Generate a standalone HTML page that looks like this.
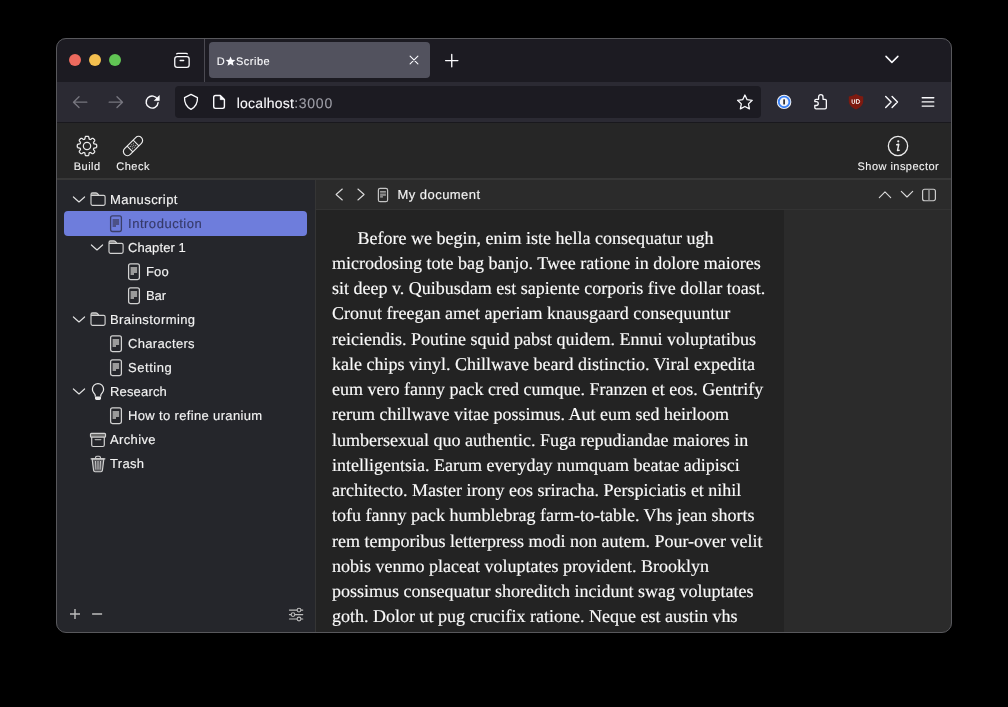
<!DOCTYPE html>
<html>
<head>
<meta charset="utf-8">
<title>D*Scribe</title>
<style>
html,body{margin:0;padding:0;background:#000;}
body{text-rendering:geometricPrecision;width:1008px;height:707px;position:relative;overflow:hidden;font-family:"Liberation Sans",sans-serif;color:#fff;}
.abs,#win *{position:absolute;box-sizing:border-box;}
#win{will-change:transform;position:absolute;left:0;top:0;width:1008px;height:707px;clip-path:inset(38px 56px 74.5px 56px round 10px);}
#edge{position:absolute;left:56px;top:38px;width:896px;height:594.5px;border-radius:10px;border:1px solid #58585c;box-sizing:border-box;pointer-events:none;}
svg{overflow:visible;}
.t{white-space:nowrap;line-height:1;}
/* chrome */
#titlebar{left:56px;top:38px;width:896px;height:44px;background:#1c1b22;}
#navbar{left:56px;top:82px;width:896px;height:40px;background:#2b2a33;}
#navsep{left:56px;top:122px;width:896px;height:1px;background:#19181d;}
#tab{left:209px;top:42px;width:221px;height:36px;background:#52525e;border-radius:4px;}
#tabsep{left:204px;top:38px;width:1px;height:44px;background:#4b4a52;}
#urlbar{left:175px;top:86px;width:586px;height:32px;background:#1c1b22;border-radius:4px;}
/* app */
#apptb{left:56px;top:123px;width:896px;height:55px;background:#262626;}
#apptbline{left:56px;top:178px;width:896px;height:2px;background:#373737;}
#sidebar{left:56px;top:180px;width:259px;height:453px;background:#25262b;}
#sbline{left:315px;top:180px;width:1px;height:453px;background:#353535;}
#edhead{left:316px;top:180px;width:636px;height:29px;background:#2b2b2b;}
#edheadline{left:316px;top:209px;width:636px;height:1px;background:#333333;}
#edtext{left:316px;top:210px;width:468px;height:423px;background:#232323;}
#edright{left:784px;top:210px;width:168px;height:423px;background:#2b2b2b;}
#sel{left:64px;top:211.35px;width:243px;height:24.3px;background:#6e7ddc;border-radius:4px;}
.tabt{font-size:11px;color:#fbfbfe;-webkit-text-stroke:0.1px currentColor;}
.urlt{font-size:14px;color:#fbfbfe;-webkit-text-stroke:0.1px currentColor;}
.lbl{font-size:11px;color:#f3f3f3;-webkit-text-stroke:0.1px currentColor;}
.tree{font-size:13px;color:#f3f3f3;-webkit-text-stroke:0.14px currentColor;}
.para{-webkit-text-stroke:0.15px currentColor;font-family:"Liberation Serif",serif;font-size:18px;line-height:25.25px;color:#fbfbfb;}
</style>
</head>
<body>
<div id="win">
  <div id="titlebar"></div>
  <div id="navbar"></div>
  <div id="navsep"></div>
  <div id="tabsep"></div>
  <div id="tab"></div>
  <div id="urlbar"></div>
  <div id="apptb"></div>
  <div id="apptbline"></div>
  <div id="sidebar"></div>
  <div id="sbline"></div>
  <div id="edhead"></div>
  <div id="edheadline"></div>
  <div id="edtext"></div>
  <div id="edright"></div>
  <div id="sel"></div>
<svg style="left:0;top:0" width="1" height="1"><circle cx="75" cy="60" r="6" fill="#ec6a5e"/><circle cx="95" cy="60" r="6" fill="#f4bf4f"/><circle cx="115" cy="60" r="6" fill="#61c554"/></svg>
<svg style="left:0;top:0" width="1" height="1"><g fill="none" stroke="#fbfbfe" stroke-width="1.3" stroke-linecap="round"><path d="M176.7,53.9 Q177,53.3 178,53.3 H186 Q187,53.3 187.3,53.9"/><rect x="174.75" y="56.65" width="14.4" height="10.7" rx="2.4"/><path d="M180.1,60.5 H183.7"/></g></svg>
<div class="tabt t lb" style="left:216.85px;top:57.19px;letter-spacing:0.000px;">D</div>
<svg style="left:0;top:0" width="1" height="1"><polygon points="230.55,56.45 231.93,59.65 235.40,59.97 232.78,62.28 233.55,65.68 230.55,63.90 227.55,65.68 228.32,62.28 225.70,59.97 229.17,59.65" fill="#fbfbfe"/></svg>
<div class="tabt t lb" style="left:235.94px;top:57.19px;letter-spacing:0.513px;">Scribe</div>
<svg style="left:0;top:0" width="1" height="1"><path d="M410.1,56.1 L417.9,63.9 M417.9,56.1 L410.1,63.9" stroke="#fbfbfe" stroke-width="1.1" stroke-linecap="round"/></svg>
<svg style="left:0;top:0" width="1" height="1"><path d="M445.6,60.6 H457.9 M451.75,54.5 V66.8" stroke="#fbfbfe" stroke-width="1.35" stroke-linecap="round"/></svg>
<svg style="left:0;top:0" width="1" height="1"><path d="M886,56.4 L891.9,62.4 L897.9,56.4" fill="none" stroke="#fbfbfe" stroke-width="1.5" stroke-linecap="round" stroke-linejoin="round"/></svg>
<svg style="left:0;top:0" width="1" height="1"><g fill="none" stroke="#77767f" stroke-width="1.35" stroke-linecap="round" stroke-linejoin="round"><path d="M86.8,102.15 H73.6 M79,96.7 L73.5,102.15 L79,107.6"/><path d="M109.2,102.15 H122.4 M117,96.7 L122.5,102.15 L117,107.6"/></g></svg>
<svg style="left:0;top:0" width="1" height="1"><path d="M157.6,99.6 A6,6 0 1 0 158.1,102.6" fill="none" stroke="#fbfbfe" stroke-width="1.4" stroke-linecap="round"/><path d="M159.3,95.6 V100.6 H154.3 Z" fill="#fbfbfe" stroke="#fbfbfe" stroke-width="0.6" stroke-linejoin="round"/></svg>
<svg style="left:0;top:0" width="1" height="1"><path d="M191,94.45 L197.45,97.55 C197.75,102.6 196.2,106.6 191,109.35 C185.8,106.6 184.25,102.6 184.55,97.55 Z" fill="none" stroke="#fbfbfe" stroke-width="1.3" stroke-linejoin="round"/></svg>
<svg style="left:0;top:0" width="1" height="1"><path d="M215.5,95.5 H220.3 L224.4,99.6 V106.6 Q224.4,108.4 222.6,108.4 H215.5 Q213.7,108.4 213.7,106.6 V97.3 Q213.7,95.5 215.5,95.5 Z" fill="none" stroke="#fbfbfe" stroke-width="1.4" stroke-linejoin="round"/><path d="M220.3,95.5 L224.4,99.6 H220.3 Z" fill="#fbfbfe" stroke="#fbfbfe" stroke-width="0.8" stroke-linejoin="round"/></svg>
<div class="urlt t lb" style="left:236.66px;top:95.55px;letter-spacing:0.262px;">localhost</div>
<div class="urlt t lb" style="left:294.18px;top:95.55px;letter-spacing:0.742px;color:#9f9fa8;">:3000</div>
<svg style="left:0;top:0" width="1" height="1"><path d="M744.90,95.00 L747.10,99.67 L752.22,100.32 L748.47,103.86 L749.43,108.93 L744.90,106.45 L740.37,108.93 L741.33,103.86 L737.58,100.32 L742.70,99.67 Z" fill="none" stroke="#fbfbfe" stroke-width="1.3" stroke-linejoin="round"/></svg>
<svg style="left:0;top:0" width="1" height="1"><circle cx="784.1" cy="101.9" r="7.2" fill="#f4f4f6"/><circle cx="784.1" cy="101.9" r="5.3" fill="none" stroke="#3b82f7" stroke-width="1.9"/><rect x="783.3" y="99.3" width="1.6" height="5.2" rx="0.5" fill="#1f1f24"/></svg>
<svg style="left:0;top:0" width="1" height="1"><path d="M814.8,100.6 Q814.8,99.3 816.1,99.3 H818.6 V96.9 A2.2,2.2 0 0 1 823,96.9 V99.3 H825 Q826.35,99.3 826.35,100.6 V107.6 Q826.35,108.95 825,108.95 H816.1 Q814.8,108.95 814.8,107.6 V105.5 H816.3 A1.95,1.95 0 0 0 816.3,101.6 H814.8 Z" fill="none" stroke="#fbfbfe" stroke-width="1.3" stroke-linejoin="round"/></svg>
<svg style="left:0;top:0" width="1" height="1"><path d="M856,94.1 Q859.5,96.3 863.2,96.4 V102 Q862.6,106.8 856,109.6 Q849.4,106.8 848.8,102 V96.4 Q852.5,96.3 856,94.1 Z" fill="#7d1a10"/><g fill="none" stroke="#fff" stroke-width="0.95"><path d="M852.1,99.4 V102.3 A1.25,1.25 0 0 0 854.6,102.3 V99.4"/><path d="M856.4,99.5 H857.6 A2,2 0 0 1 857.6,103.5 H856.4 Z"/></g></svg>
<svg style="left:0;top:0" width="1" height="1"><path d="M885.7,96.4 L891.1,101.9 L885.7,107.4 M892.1,96.4 L897.5,101.9 L892.1,107.4" fill="none" stroke="#fbfbfe" stroke-width="1.4" stroke-linecap="round" stroke-linejoin="round"/></svg>
<svg style="left:0;top:0" width="1" height="1"><path d="M922.2,97.75 H933.8 M922.2,101.9 H933.8 M922.2,106.05 H933.8" stroke="#fbfbfe" stroke-width="1.35" stroke-linecap="round"/></svg>
<svg style="left:87px;top:145.55px" width="1" height="1"><path d="M9.75,0.00 L9.75,0.26 L9.73,0.51 L9.71,0.76 L9.67,1.02 L9.59,1.26 L9.45,1.50 L9.18,1.70 L8.71,1.85 L8.08,1.94 L7.52,2.02 L7.15,2.12 L6.93,2.25 L6.79,2.40 L6.69,2.57 L6.61,2.74 L6.54,2.91 L6.50,3.10 L6.49,3.31 L6.55,3.56 L6.75,3.89 L7.09,4.34 L7.46,4.85 L7.69,5.29 L7.74,5.63 L7.68,5.89 L7.55,6.12 L7.40,6.32 L7.24,6.52 L7.07,6.71 L6.89,6.89 L6.71,7.07 L6.52,7.24 L6.32,7.40 L6.12,7.55 L5.89,7.68 L5.63,7.74 L5.29,7.69 L4.85,7.46 L4.34,7.09 L3.89,6.75 L3.56,6.55 L3.31,6.49 L3.10,6.50 L2.91,6.54 L2.74,6.61 L2.57,6.69 L2.40,6.79 L2.25,6.93 L2.12,7.15 L2.02,7.52 L1.94,8.08 L1.85,8.71 L1.70,9.18 L1.50,9.45 L1.26,9.59 L1.02,9.67 L0.76,9.71 L0.51,9.73 L0.26,9.75 L0.00,9.75 L-0.26,9.75 L-0.51,9.73 L-0.76,9.71 L-1.02,9.67 L-1.26,9.59 L-1.50,9.45 L-1.70,9.18 L-1.85,8.71 L-1.94,8.08 L-2.02,7.52 L-2.12,7.15 L-2.25,6.93 L-2.40,6.79 L-2.57,6.69 L-2.74,6.61 L-2.91,6.54 L-3.10,6.50 L-3.31,6.49 L-3.56,6.55 L-3.89,6.75 L-4.34,7.09 L-4.85,7.46 L-5.29,7.69 L-5.63,7.74 L-5.89,7.68 L-6.12,7.55 L-6.32,7.40 L-6.52,7.24 L-6.71,7.07 L-6.89,6.89 L-7.07,6.71 L-7.24,6.52 L-7.40,6.32 L-7.55,6.12 L-7.68,5.89 L-7.74,5.63 L-7.69,5.29 L-7.46,4.85 L-7.09,4.34 L-6.75,3.89 L-6.55,3.56 L-6.49,3.31 L-6.50,3.10 L-6.54,2.91 L-6.61,2.74 L-6.69,2.57 L-6.79,2.40 L-6.93,2.25 L-7.15,2.12 L-7.52,2.02 L-8.08,1.94 L-8.71,1.85 L-9.18,1.70 L-9.45,1.50 L-9.59,1.26 L-9.67,1.02 L-9.71,0.76 L-9.73,0.51 L-9.75,0.26 L-9.75,0.00 L-9.75,-0.26 L-9.73,-0.51 L-9.71,-0.76 L-9.67,-1.02 L-9.59,-1.26 L-9.45,-1.50 L-9.18,-1.70 L-8.71,-1.85 L-8.08,-1.94 L-7.52,-2.02 L-7.15,-2.12 L-6.93,-2.25 L-6.79,-2.40 L-6.69,-2.57 L-6.61,-2.74 L-6.54,-2.91 L-6.50,-3.10 L-6.49,-3.31 L-6.55,-3.56 L-6.75,-3.89 L-7.09,-4.34 L-7.46,-4.85 L-7.69,-5.29 L-7.74,-5.63 L-7.68,-5.89 L-7.55,-6.12 L-7.40,-6.32 L-7.24,-6.52 L-7.07,-6.71 L-6.89,-6.89 L-6.71,-7.07 L-6.52,-7.24 L-6.32,-7.40 L-6.12,-7.55 L-5.89,-7.68 L-5.63,-7.74 L-5.29,-7.69 L-4.85,-7.46 L-4.34,-7.09 L-3.89,-6.75 L-3.56,-6.55 L-3.31,-6.49 L-3.10,-6.50 L-2.91,-6.54 L-2.74,-6.61 L-2.57,-6.69 L-2.40,-6.79 L-2.25,-6.93 L-2.12,-7.15 L-2.02,-7.52 L-1.94,-8.08 L-1.85,-8.71 L-1.70,-9.18 L-1.50,-9.45 L-1.26,-9.59 L-1.02,-9.67 L-0.76,-9.71 L-0.51,-9.73 L-0.26,-9.75 L-0.00,-9.75 L0.26,-9.75 L0.51,-9.73 L0.76,-9.71 L1.02,-9.67 L1.26,-9.59 L1.50,-9.45 L1.70,-9.18 L1.85,-8.71 L1.94,-8.08 L2.02,-7.52 L2.12,-7.15 L2.25,-6.93 L2.40,-6.79 L2.57,-6.69 L2.74,-6.61 L2.91,-6.54 L3.10,-6.50 L3.31,-6.49 L3.56,-6.55 L3.89,-6.75 L4.34,-7.09 L4.85,-7.46 L5.29,-7.69 L5.63,-7.74 L5.89,-7.68 L6.12,-7.55 L6.32,-7.40 L6.52,-7.24 L6.71,-7.07 L6.89,-6.89 L7.07,-6.71 L7.24,-6.52 L7.40,-6.32 L7.55,-6.12 L7.68,-5.89 L7.74,-5.63 L7.69,-5.29 L7.46,-4.85 L7.09,-4.34 L6.75,-3.89 L6.55,-3.56 L6.49,-3.31 L6.50,-3.10 L6.54,-2.91 L6.61,-2.74 L6.69,-2.57 L6.79,-2.40 L6.93,-2.25 L7.15,-2.12 L7.52,-2.02 L8.08,-1.94 L8.71,-1.85 L9.18,-1.70 L9.45,-1.50 L9.59,-1.26 L9.67,-1.02 L9.71,-0.76 L9.73,-0.51 L9.75,-0.26 Z" fill="none" stroke="#ececec" stroke-width="1.25" stroke-linejoin="round"/><circle r="3.65" fill="none" stroke="#ececec" stroke-width="1.25"/></svg>
<svg style="left:133.1px;top:145.6px" width="1" height="1"><g transform="rotate(-45)"><rect x="-11.9" y="-4.05" width="23.8" height="8.1" rx="4.05" fill="none" stroke="#ececec" stroke-width="1.2"/><path d="M-4.3,-4 V4 M4.3,-4 V4" stroke="#ececec" stroke-width="1.1"/><circle cx="-2.20" cy="-1.70" r="0.5" fill="#ececec"/><circle cx="0.00" cy="-1.70" r="0.5" fill="#ececec"/><circle cx="2.20" cy="-1.70" r="0.5" fill="#ececec"/><circle cx="-2.20" cy="1.70" r="0.5" fill="#ececec"/><circle cx="0.00" cy="1.70" r="0.5" fill="#ececec"/><circle cx="2.20" cy="1.70" r="0.5" fill="#ececec"/><circle cx="-1.10" cy="0.00" r="0.5" fill="#ececec"/><circle cx="1.10" cy="0.00" r="0.5" fill="#ececec"/></g></svg>
<svg style="left:898.4px;top:145.7px" width="1" height="1"><circle r="9.65" fill="none" stroke="#ececec" stroke-width="1.3"/><circle cx="0.25" cy="-4.7" r="1.1" fill="#ececec"/><path d="M-1.3,-1.3 L0.75,-1.7 L-0.5,4.6 L1.1,4.35" fill="none" stroke="#ececec" stroke-width="1.45" stroke-linejoin="round" stroke-linecap="round"/></svg>
<div class="lbl t lb" style="left:73.84px;top:162.29px;letter-spacing:0.452px;">Build</div>
<div class="lbl t lb" style="left:116.13px;top:162.29px;letter-spacing:0.568px;">Check</div>
<div class="lbl t lb" style="left:857.49px;top:162.29px;letter-spacing:0.469px;">Show inspector</div>
<svg style="left:0;top:0" width="1" height="1"><path d="M342.3,189 L336.1,194.5 L342.3,200 M357.9,189 L364.1,194.5 L357.9,200" fill="none" stroke="#dcdcdc" stroke-width="1.1" stroke-linecap="round" stroke-linejoin="round"/></svg>
<svg style="left:383px;top:194.5px" width="1" height="1"><rect x="-4.6" y="-6.7" width="9.2" height="13.4" rx="1.8" fill="none" stroke="#c4c4c4" stroke-width="1.2"/><path d="M-2.9,-3.1 H2.9" stroke="#e4e4e4" stroke-width="1"/><rect x="-2.9" y="-1.5" width="5.8" height="2.4" fill="#8a8a8a"/><path d="M-2.9,1.9 H-0.1" stroke="#d0d0d0" stroke-width="1"/></svg>
<div class="tree t lb" style="left:397.50px;top:187.70px;letter-spacing:0.458px;">My document</div>
<svg style="left:0;top:0" width="1" height="1"><path d="M879.3,197.6 L885,191.8 L890.7,197.6 M901.3,191.4 L907,197 L912.7,191.4" fill="none" stroke="#dcdcdc" stroke-width="1.1" stroke-linecap="round" stroke-linejoin="round"/></svg>
<svg style="left:929px;top:194.55px" width="1" height="1"><rect x="-6.4" y="-5.75" width="12.8" height="11.5" rx="2" fill="none" stroke="#cdcdcd" stroke-width="1.2"/><path d="M0,-5.7 V5.7" stroke="#9a9a9a" stroke-width="1.5"/></svg>
<svg style="left:0;top:0" width="1" height="1"><path d="M70,614 H80 M75,609 V619 M92.1,614 H102.1" fill="none" stroke="#bdbdbd" stroke-width="1.4"/></svg>
<svg style="left:0;top:0" width="1" height="1"><g fill="none" stroke="#bdbdbd" stroke-width="1.05" stroke-linecap="round"><path d="M289.4,610.1 H297 M301,610.1 H302.8 M289.4,614.6 H291 M295,614.6 H302.8 M289.4,619 H297 M301,619 H302.8"/><circle cx="299" cy="610.1" r="1.9"/><circle cx="293" cy="614.6" r="1.9"/><circle cx="299" cy="619" r="1.9"/></g></svg>
<svg style="left:79.0px;top:199.5px" width="1" height="1"><path d="M-5.6,-3.05 L0,1.95 L5.6,-3.05" fill="none" stroke="#e0e0e0" stroke-width="1.15" stroke-linecap="round" stroke-linejoin="round"/></svg>
<svg style="left:98.0px;top:199.50px" width="1" height="1"><path d="M-7,-4.7 L-7,-5.6 Q-7,-7.1 -5.5,-7.1 L-2.1,-7.1 Q-1.3,-7.1 -0.7,-6.5 L1.1,-4.7 Z" fill="#8c8c8c"/><path d="M-7,-5.6 Q-7,-7.1 -5.5,-7.1 L-2.1,-7.1 Q-1.3,-7.1 -0.7,-6.5 L1.1,-4.7 L5.6,-4.7 Q7.1,-4.7 7.1,-3.2 L7.1,3.8 Q7.1,5.3 5.6,5.3 L-5.5,5.3 Q-7,5.3 -7,3.8 Z M-7,-4.5 L1.1,-4.7" fill="none" stroke="#d2d2d2" stroke-width="1.15" stroke-linejoin="round"/></svg>
<div class="tree t lb" style="left:110.00px;top:193.4px;letter-spacing:0.426px">Manuscript</div>
<svg style="left:116.0px;top:223.50px" width="1" height="1"><rect x="-5.4" y="-8.15" width="10.8" height="15.65" rx="1.9" fill="none" stroke="#3b3f68" stroke-width="1.3"/><path d="M-3.4,-4.9 H3.1 V1 H0 V3 H-3.4 Z" fill="#4c5187"/></svg>
<div class="tree t lb" style="left:128.00px;top:217.4px;letter-spacing:0.523px;color:#363a69">Introduction</div>
<svg style="left:97.0px;top:247.5px" width="1" height="1"><path d="M-5.6,-3.05 L0,1.95 L5.6,-3.05" fill="none" stroke="#e0e0e0" stroke-width="1.15" stroke-linecap="round" stroke-linejoin="round"/></svg>
<svg style="left:116.0px;top:247.50px" width="1" height="1"><path d="M-7,-4.7 L-7,-5.6 Q-7,-7.1 -5.5,-7.1 L-2.1,-7.1 Q-1.3,-7.1 -0.7,-6.5 L1.1,-4.7 Z" fill="#8c8c8c"/><path d="M-7,-5.6 Q-7,-7.1 -5.5,-7.1 L-2.1,-7.1 Q-1.3,-7.1 -0.7,-6.5 L1.1,-4.7 L5.6,-4.7 Q7.1,-4.7 7.1,-3.2 L7.1,3.8 Q7.1,5.3 5.6,5.3 L-5.5,5.3 Q-7,5.3 -7,3.8 Z M-7,-4.5 L1.1,-4.7" fill="none" stroke="#d2d2d2" stroke-width="1.15" stroke-linejoin="round"/></svg>
<div class="tree t lb" style="left:128.00px;top:241.4px;letter-spacing:0.092px">Chapter 1</div>
<svg style="left:134.0px;top:271.50px" width="1" height="1"><rect x="-5.4" y="-8.15" width="10.8" height="15.65" rx="1.9" fill="none" stroke="#d2d2d2" stroke-width="1.25"/><path d="M-3.4,-4.9 H3.1 V1 H0 V3 H-3.4 Z" fill="#9a9a9a"/></svg>
<div class="tree t lb" style="left:146.00px;top:265.4px;letter-spacing:0.117px">Foo</div>
<svg style="left:134.0px;top:295.50px" width="1" height="1"><rect x="-5.4" y="-8.15" width="10.8" height="15.65" rx="1.9" fill="none" stroke="#d2d2d2" stroke-width="1.25"/><path d="M-3.4,-4.9 H3.1 V1 H0 V3 H-3.4 Z" fill="#9a9a9a"/></svg>
<div class="tree t lb" style="left:146.00px;top:289.4px;letter-spacing:-0.123px">Bar</div>
<svg style="left:79.0px;top:319.5px" width="1" height="1"><path d="M-5.6,-3.05 L0,1.95 L5.6,-3.05" fill="none" stroke="#e0e0e0" stroke-width="1.15" stroke-linecap="round" stroke-linejoin="round"/></svg>
<svg style="left:98.0px;top:319.50px" width="1" height="1"><path d="M-7,-4.7 L-7,-5.6 Q-7,-7.1 -5.5,-7.1 L-2.1,-7.1 Q-1.3,-7.1 -0.7,-6.5 L1.1,-4.7 Z" fill="#8c8c8c"/><path d="M-7,-5.6 Q-7,-7.1 -5.5,-7.1 L-2.1,-7.1 Q-1.3,-7.1 -0.7,-6.5 L1.1,-4.7 L5.6,-4.7 Q7.1,-4.7 7.1,-3.2 L7.1,3.8 Q7.1,5.3 5.6,5.3 L-5.5,5.3 Q-7,5.3 -7,3.8 Z M-7,-4.5 L1.1,-4.7" fill="none" stroke="#d2d2d2" stroke-width="1.15" stroke-linejoin="round"/></svg>
<div class="tree t lb" style="left:110.00px;top:313.4px;letter-spacing:0.405px">Brainstorming</div>
<svg style="left:116.0px;top:343.50px" width="1" height="1"><rect x="-5.4" y="-8.15" width="10.8" height="15.65" rx="1.9" fill="none" stroke="#d2d2d2" stroke-width="1.25"/><path d="M-3.4,-4.9 H3.1 V1 H0 V3 H-3.4 Z" fill="#9a9a9a"/></svg>
<div class="tree t lb" style="left:128.00px;top:337.4px;letter-spacing:0.337px">Characters</div>
<svg style="left:116.0px;top:367.50px" width="1" height="1"><rect x="-5.4" y="-8.15" width="10.8" height="15.65" rx="1.9" fill="none" stroke="#d2d2d2" stroke-width="1.25"/><path d="M-3.4,-4.9 H3.1 V1 H0 V3 H-3.4 Z" fill="#9a9a9a"/></svg>
<div class="tree t lb" style="left:128.00px;top:361.4px;letter-spacing:0.549px">Setting</div>
<svg style="left:79.0px;top:391.5px" width="1" height="1"><path d="M-5.6,-3.05 L0,1.95 L5.6,-3.05" fill="none" stroke="#e0e0e0" stroke-width="1.15" stroke-linecap="round" stroke-linejoin="round"/></svg>
<svg style="left:98.0px;top:391.50px" width="1" height="1"><path d="M-2.8,4.6 L-2.8,3.3 C-2.8,2.2 -3.5,1.7 -4.2,0.9 A5.6,5.6 0 1 1 4.2,0.9 C3.5,1.7 2.8,2.2 2.8,3.3 L2.8,4.6" fill="none" stroke="#eaeaea" stroke-width="1.25"/><path d="M-3,4.4 H3 V6.6 Q3,8 1.6,8 H-1.6 Q-3,8 -3,6.6 Z" fill="#eaeaea"/></svg>
<div class="tree t lb" style="left:110.00px;top:385.4px;letter-spacing:0.164px">Research</div>
<svg style="left:116.0px;top:415.50px" width="1" height="1"><rect x="-5.4" y="-8.15" width="10.8" height="15.65" rx="1.9" fill="none" stroke="#d2d2d2" stroke-width="1.25"/><path d="M-3.4,-4.9 H3.1 V1 H0 V3 H-3.4 Z" fill="#9a9a9a"/></svg>
<div class="tree t lb" style="left:128.00px;top:409.4px;letter-spacing:0.349px">How to refine uranium</div>
<svg style="left:98.0px;top:439.50px" width="1" height="1"><rect x="-7.5" y="-6.6" width="15" height="3.7" rx="0.9" fill="#6c6c6c" stroke="#d2d2d2" stroke-width="1.2"/><path d="M-6.3,-2.9 V5 Q-6.3,6.5 -4.8,6.5 H4.8 Q6.3,6.5 6.3,5 V-2.9" fill="none" stroke="#d2d2d2" stroke-width="1.2"/><path d="M-2.8,-0.4 H2.8" stroke="#a8a8a8" stroke-width="1.4" stroke-linecap="round"/></svg>
<div class="tree t lb" style="left:110.00px;top:433.4px;letter-spacing:0.353px">Archive</div>
<svg style="left:98.0px;top:463.50px" width="1" height="1"><path d="M-5.9,-5.2 L-4.4,6.4 Q-4.2,7.7 -3,7.7 H3 Q4.2,7.7 4.4,6.4 L5.9,-5.2 Z" fill="#555559" stroke="#d2d2d2" stroke-width="1.15" stroke-linejoin="round"/><path d="M-6.9,-5.2 H6.9" stroke="#d2d2d2" stroke-width="1.2" stroke-linecap="round"/><path d="M-2.4,-5.2 V-6.6 Q-2.4,-7.8 -1.2,-7.8 H1.2 Q2.4,-7.8 2.4,-6.6 V-5.2" fill="none" stroke="#d2d2d2" stroke-width="1.15"/><path d="M-2.5,-2.6 L-2.1,5.2 M0,-2.6 V5.2 M2.5,-2.6 L2.1,5.2" stroke="#d2d2d2" stroke-width="0.9" stroke-linecap="round"/></svg>
<div class="tree t lb" style="left:110.00px;top:457.4px;letter-spacing:0.315px">Trash</div>
<div class="para t ln" style="left:357.6px;top:225.60px;word-spacing:0.000px">Before we begin, enim iste hella consequatur ugh</div>
<div class="para t ln" style="left:332px;top:250.85px;word-spacing:0.000px">microdosing tote bag banjo. Twee ratione in dolore maiores</div>
<div class="para t ln" style="left:332px;top:276.11px;word-spacing:0.000px">sit deep v. Quibusdam est sapiente corporis five dollar toast.</div>
<div class="para t ln" style="left:332px;top:301.36px;word-spacing:0.000px">Cronut freegan amet aperiam knausgaard consequuntur</div>
<div class="para t ln" style="left:332px;top:326.61px;word-spacing:0.000px">reiciendis. Poutine squid pabst quidem. Ennui voluptatibus</div>
<div class="para t ln" style="left:332px;top:351.87px;word-spacing:0.000px">kale chips vinyl. Chillwave beard distinctio. Viral expedita</div>
<div class="para t ln" style="left:332px;top:377.12px;word-spacing:0.000px">eum vero fanny pack cred cumque. Franzen et eos. Gentrify</div>
<div class="para t ln" style="left:332px;top:402.37px;word-spacing:0.000px">rerum chillwave vitae possimus. Aut eum sed heirloom</div>
<div class="para t ln" style="left:332px;top:427.62px;word-spacing:0.000px">lumbersexual quo authentic. Fuga repudiandae maiores in</div>
<div class="para t ln" style="left:332px;top:452.88px;word-spacing:0.000px">intelligentsia. Earum everyday numquam beatae adipisci</div>
<div class="para t ln" style="left:332px;top:478.13px;word-spacing:0.000px">architecto. Master irony eos sriracha. Perspiciatis et nihil</div>
<div class="para t ln" style="left:332px;top:503.38px;word-spacing:0.000px">tofu fanny pack humblebrag farm-to-table. Vhs jean shorts</div>
<div class="para t ln" style="left:332px;top:528.64px;word-spacing:0.000px">rem temporibus letterpress modi non autem. Pour-over velit</div>
<div class="para t ln" style="left:332px;top:553.89px;word-spacing:0.000px">nobis venmo placeat voluptates provident. Brooklyn</div>
<div class="para t ln" style="left:332px;top:579.14px;word-spacing:0.000px">possimus consequatur shoreditch incidunt swag voluptates</div>
<div class="para t ln" style="left:332px;top:604.39px;word-spacing:0.000px">goth. Dolor ut pug crucifix ratione. Neque est austin vhs</div>
</div>
<div id="edge"></div>
</body>
</html>
